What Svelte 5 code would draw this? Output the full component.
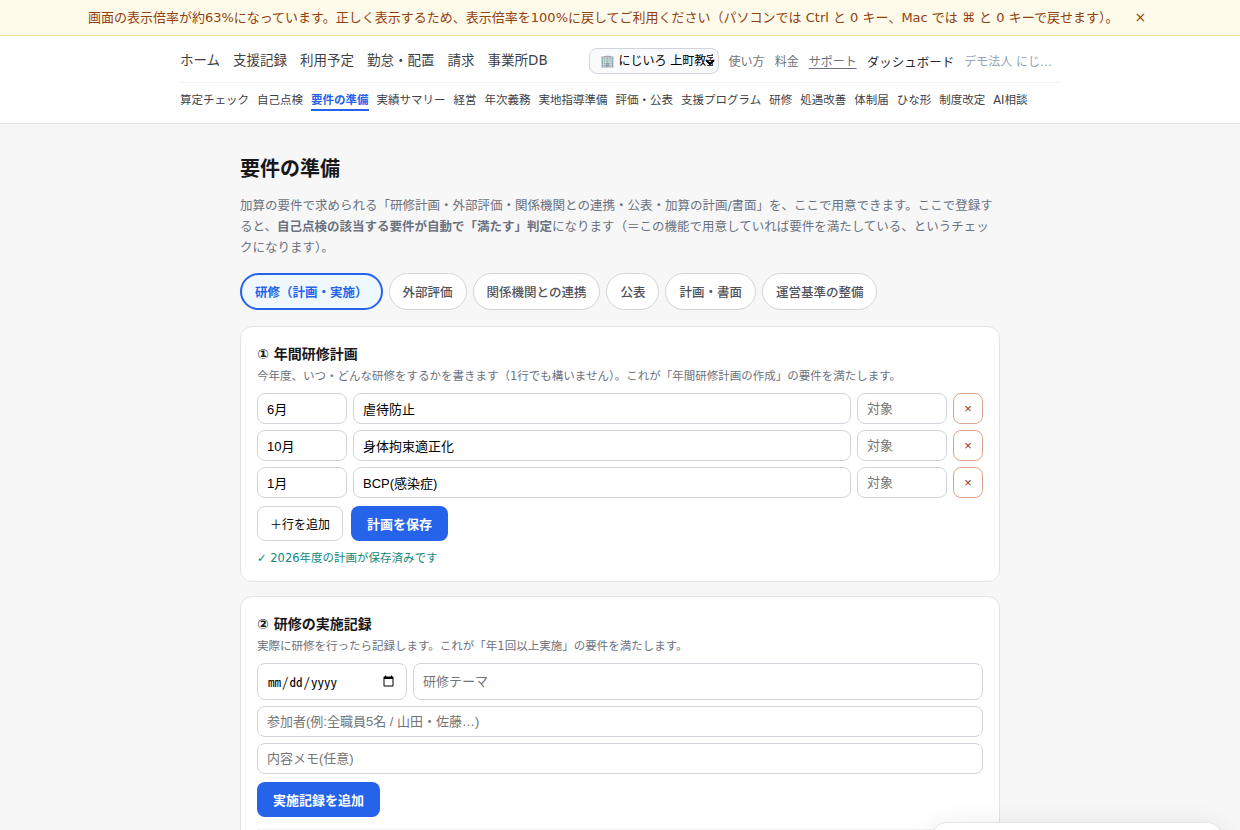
<script lang="ts">
    type PlanRow = { month: string; theme: string; target: string };

    const mainLinks = ["ホーム", "支援記録", "利用予定", "勤怠・配置", "請求", "事業所DB"];

    const subLinks = [
        "算定チェック",
        "自己点検",
        "要件の準備",
        "実績サマリー",
        "経営",
        "年次義務",
        "実地指導準備",
        "評価・公表",
        "支援プログラム",
        "研修",
        "処遇改善",
        "体制届",
        "ひな形",
        "制度改定",
        "AI相談",
    ];
    const currentLink = "要件の準備";

    const tabs = [
        "研修（計画・実施）",
        "外部評価",
        "関係機関との連携",
        "公表",
        "計画・書面",
        "運営基準の整備",
    ];

    let activeTab = $state(tabs[0]);
    let showNotice = $state(true);

    let rows: PlanRow[] = $state([
        { month: "6月", theme: "虐待防止", target: "" },
        { month: "10月", theme: "身体拘束適正化", target: "" },
        { month: "1月", theme: "BCP(感染症)", target: "" },
    ]);

    const addRow = () => {
        rows.push({ month: "", theme: "", target: "" });
    };

    const removeRow = (index: number) => {
        rows.splice(index, 1);
    };
</script>

<div class="page">
    {#if showNotice}
        <div class="notice">
            <span>画面の表示倍率が約63%になっています。正しく表示するため、表示倍率を100%に戻してご利用ください（パソコンでは Ctrl と 0 キー、Mac では ⌘ と 0 キーで戻せます）。</span>
            <button type="button" aria-label="閉じる" onclick={() => (showNotice = false)}>×</button>
        </div>
    {/if}

    <header>
        <div class="header-inner">
            <div class="top-row">
                <nav class="main-nav">
                    {#each mainLinks as link}
                        <a href="#top">{link}</a>
                    {/each}
                </nav>

                <div class="account">
                    <div class="office">
                        <select aria-label="事業所">
                            <option>🏢 にじいろ 上町教室</option>
                        </select>
                        <svg width="10" height="6" viewBox="0 0 10 6" aria-hidden="true">
                            <path d="M1 1l4 4 4-4" fill="none" stroke="#000" stroke-width="2" />
                        </svg>
                    </div>
                    <a href="#top">使い方</a>
                    <a href="#top">料金</a>
                    <a href="#top" class="support">サポート</a>
                    <a href="#top" class="dashboard">ダッシュボード</a>
                    <span class="org">デモ法人 にじ…</span>
                </div>
            </div>

            <nav class="sub-nav">
                {#each subLinks as link}
                    <a href="#top" class:current={link === currentLink}>{link}</a>
                {/each}
            </nav>
        </div>
    </header>

    <main>
        <h1>要件の準備</h1>
        <p class="lead">
            加算の要件で求められる「研修計画・外部評価・関係機関との連携・公表・加算の計画/書面」を、ここで用意できます。ここで登録すると、<b>自己点検の該当する要件が自動で「満たす」判定</b>になります（＝この機能で用意していれば要件を満たしている、というチェックになります）。
        </p>

        <div class="tabs">
            {#each tabs as tab}
                <button type="button" class:active={tab === activeTab} onclick={() => (activeTab = tab)}>{tab}</button>
            {/each}
        </div>

        <section class="card">
            <h2>① 年間研修計画</h2>
            <p class="hint">今年度、いつ・どんな研修をするかを書きます（1行でも構いません）。これが「年間研修計画の作成」の要件を満たします。</p>

            {#each rows as row, i}
                <div class="plan-row">
                    <input class="short" bind:value={row.month} placeholder="月" />
                    <input class="wide" bind:value={row.theme} placeholder="研修テーマ" />
                    <input class="short" bind:value={row.target} placeholder="対象" />
                    <button type="button" class="remove" onclick={() => removeRow(i)}>×</button>
                </div>
            {/each}

            <div class="actions">
                <button type="button" class="secondary" onclick={addRow}>＋行を追加</button>
                <button type="button" class="primary">計画を保存</button>
            </div>
            <p class="saved">✓ 2026年度の計画が保存済みです</p>
        </section>

        <section class="card">
            <h2>② 研修の実施記録</h2>
            <p class="hint">実際に研修を行ったら記録します。これが「年1回以上実施」の要件を満たします。</p>

            <div class="record-row">
                <input class="date" type="date" />
                <input class="wide" placeholder="研修テーマ" />
            </div>
            <input class="full" placeholder="参加者(例:全職員5名 / 山田・佐藤…)" />
            <input class="full" placeholder="内容メモ(任意)" />
            <button type="button" class="primary">実施記録を追加</button>
            <div class="records"></div>
        </section>
    </main>

    <div class="floating-panel"></div>
</div>

<style>
    :global(body) {
        margin: 0;
        background: #f7f7f7;
    }

    .page {
        height: 830px;
        overflow: hidden;
        position: relative;

        color: #18181b;
        background: #f7f7f7;
        font-family: "DejaVu Sans", "Noto Sans CJK JP", sans-serif;
        line-height: 1.7;
    }

    .page * {
        box-sizing: border-box;
    }

    a {
        color: inherit;
        text-decoration: none;
    }

    button {
        cursor: pointer;
        font-family: inherit;
    }

    .notice {
        height: 36px;
        display: flex;
        justify-content: center;
        align-items: center;
        gap: 10px;

        color: #92400e;
        background: #fffbeb;
        border-bottom: 1px solid #fde68a;
        font-size: 13px;
        white-space: nowrap;
    }

    .notice span {
        padding-top: 2px;
    }

    .notice button {
        padding: 0 6px 2px;
        color: inherit;
        background: none;
        border: none;
        font-size: 14px;
    }

    header {
        height: 88px;
        background: #fff;
        border-bottom: 1px solid #e4e4e7;
    }

    .header-inner {
        width: 880px;
        margin: 0 auto;
    }

    .top-row {
        height: 47px;
        display: flex;
        justify-content: space-between;
        align-items: center;
        padding-top: 3px;
        border-bottom: 1px solid #f4f4f5;
        white-space: nowrap;
    }

    .main-nav {
        display: flex;
        gap: 13px;
        color: #3f3f46;
        font-size: 13.5px;
    }

    .account {
        display: flex;
        align-items: center;
        gap: 10px;
        padding-right: 8px;
        color: #6b7280;
        font-size: 12px;
    }

    .account a,
    .account .org {
        padding-top: 4px;
    }

    .office {
        display: flex;
        position: relative;
    }

    .office select {
        appearance: none;
        width: 130px;
        height: 26px;
        padding: 0 5px 0 10px;
        background: #f8fafc;
        border: 1px solid #d1d5db;
        border-radius: 8px;
        font-family: inherit;
        font-size: 12px;
    }

    .office svg {
        position: absolute;
        top: 11px;
        right: 4px;
        pointer-events: none;
    }

    .account .support {
        text-decoration: underline;
        text-underline-offset: 2px;
    }

    .account .dashboard {
        color: #27272a;
        font-size: 12.5px;
    }

    .account .org {
        color: #94a3b8;
    }

    .sub-nav {
        display: flex;
        gap: 8px;
        padding-top: 9px;
        color: #3f3f46;
        font-size: 11.5px;
        line-height: 17px;
        white-space: nowrap;
    }

    .sub-nav a {
        border-bottom: 2px solid transparent;
    }

    .sub-nav .current {
        color: #2563eb;
        border-color: #2563eb;
        font-weight: 700;
    }

    main {
        width: 760px;
        margin: 0 auto;
        padding-top: 28px;
    }

    h1 {
        margin: 0 0 9px;
        font-size: 20px;
    }

    .lead {
        margin: 0 0 15px;
        color: #6b7280;
        font-size: 12.5px;
        line-height: 21px;
    }

    .tabs {
        display: flex;
        gap: 6px;
        margin-bottom: 16px;
    }

    .tabs button {
        height: 37px;
        padding: 0 13px;
        color: #52525b;
        background: #fff;
        border: 1px solid #d4d4d8;
        border-radius: 999px;
        font-size: 12.5px;
        font-weight: 500;
    }

    .tabs .active {
        color: #2563eb;
        background: #eff8ff;
        border: 2px solid #2563eb;
        font-weight: 700;
    }

    .card {
        margin-bottom: 14px;
        padding: 16px 16px 12px;
        background: #fff;
        border: 1px solid #e4e4e7;
        border-radius: 12px;
    }

    h2 {
        margin: 0;
        font-size: 14px;
    }

    .hint {
        margin: 0 0 7px;
        color: #6b7280;
        font-size: 11.5px;
    }

    .plan-row,
    .record-row {
        display: flex;
        gap: 6px;
        margin-bottom: 6px;
    }

    input {
        height: 31px;
        padding: 1px 9px;
        background: #fff;
        border: 1px solid #d1d5db;
        border-radius: 8px;
        font-family: "Liberation Sans", "Noto Sans CJK JP", sans-serif;
        font-size: 13px;
    }

    .short {
        width: 90px;
    }

    .wide {
        flex: 1;
        min-width: 0;
    }

    .record-row input {
        height: 37px;
    }

    .date {
        width: 150px;
        font-family: "Noto Sans Mono CJK JP", monospace;
    }

    .full {
        display: block;
        width: 100%;
        margin-bottom: 6px;
    }

    .remove {
        width: 30px;
        padding: 0 0 1px;
        color: #9a3412;
        background: #fff;
        border: 1px solid #dba78c;
        border-radius: 8px;
        font-family: "Liberation Sans", sans-serif;
        font-size: 13px;
    }

    .actions {
        display: flex;
        gap: 8px;
        margin-top: 8px;
    }

    .secondary {
        height: 35px;
        padding: 0 12px;
        background: #fff;
        border: 1px solid #d1d5db;
        border-radius: 8px;
        font-size: 12px;
    }

    .primary {
        height: 35px;
        padding: 0 16px;
        color: #fff;
        background: #2563eb;
        border: none;
        border-radius: 8px;
        font-size: 13px;
        font-weight: 700;
    }

    .full + .primary {
        margin-top: 2px;
    }

    .saved {
        margin: 8px 0 0;
        color: #0f8a7e;
        font-size: 11.5px;
    }

    .records {
        height: 60px;
        margin-top: 12px;
        border-top: 1px solid #f4f4f5;
    }

    /* top edge of the panel docked over the page corner */
    .floating-panel {
        position: absolute;
        right: 18px;
        bottom: -92px;
        width: 290px;
        height: 100px;
        background: #fff;
        border: 1px solid #e4e4e7;
        border-radius: 14px;
        box-shadow: 0 8px 30px rgba(0, 0, 0, 0.12);
    }
</style>
